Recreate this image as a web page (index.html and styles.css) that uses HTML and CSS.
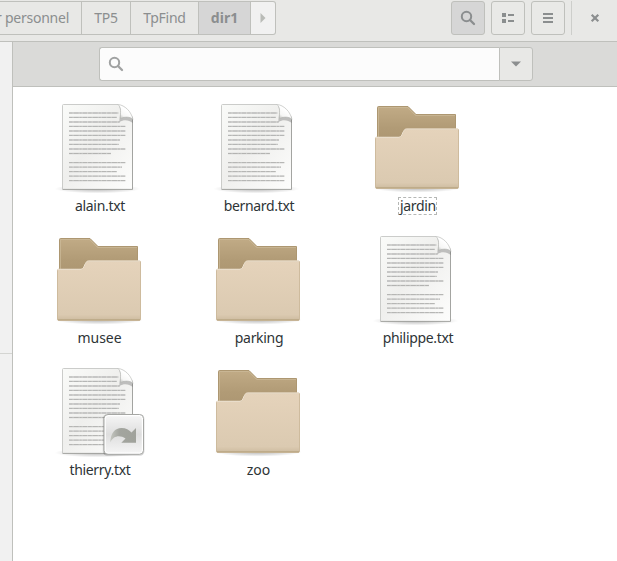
FILE: index.html
```
<!DOCTYPE html>
<html lang="fr">
<head>
<meta charset="utf-8">
<title>dir1</title>
<link rel="stylesheet" href="styles.css">
</head>
<body>
<svg class="defs" width="0" height="0" aria-hidden="true">
  <defs>
    <linearGradient id="paper" x1="0" y1="0" x2="1" y2="1"><stop offset="0" stop-color="#fafbf9"/><stop offset=".45" stop-color="#efefed"/><stop offset="1" stop-color="#fdfdfc"/></linearGradient>
    <linearGradient id="curl" x1=".1" y1="1" x2=".8" y2="0"><stop offset="0" stop-color="#b0b1ae"/><stop offset=".3" stop-color="#f6f6f5"/><stop offset=".65" stop-color="#ffffff"/><stop offset="1" stop-color="#dcdcda"/></linearGradient>
    <linearGradient id="back" x1="0" y1="0" x2="0" y2="1"><stop offset="0" stop-color="#c1ab86"/><stop offset=".4" stop-color="#b19b76"/><stop offset="1" stop-color="#a58f6c"/></linearGradient>
    <linearGradient id="front" x1="0" y1="0" x2="0" y2="1"><stop offset="0" stop-color="#e5d3bb"/><stop offset=".9" stop-color="#dbcab1"/><stop offset="1" stop-color="#cdbb9f"/></linearGradient>
    <linearGradient id="emblem" x1="0" y1="0" x2="0" y2="1"><stop offset="0" stop-color="#f4f4f4"/><stop offset=".5" stop-color="#dedede"/><stop offset="1" stop-color="#f4f4f4"/></linearGradient>
    <linearGradient id="arrow" x1="0" y1="0" x2="1" y2="0"><stop offset="0" stop-color="#c4c6c0"/><stop offset=".35" stop-color="#a3a59f"/><stop offset="1" stop-color="#a0a29b"/></linearGradient>
    <radialGradient id="shade"><stop offset="0" stop-color="#000" stop-opacity=".28"/><stop offset=".6" stop-color="#000" stop-opacity=".12"/><stop offset="1" stop-color="#000" stop-opacity="0"/></radialGradient>
    <symbol id="doc" viewBox="0 0 96 96">
      <ellipse cx="46.500" cy="88.800" rx="43" ry="4.600" fill="url(#shade)"/>
      <path d="M12.500 4.500H67.500L81.500 18.500V89.500H11.500V5.500Q11.500 4.500 12.500 4.500Z" fill="url(#paper)"/>
      <path d="M81.500 18.500V89.400H11.500" fill="none" stroke="#8d8e8a" stroke-width=".8"/>
      <path d="M11.500 89V5.500Q11.500 4.500 12.500 4.500H67" fill="none" stroke="#c5c6c4" stroke-width=".9"/>
      <path d="M18 13H67.300M18 17.400H65.700M18 22H68.700M18 26.400H74.300M18 31H74.300M18 35.400H74.300M18 40H69M18 44.400H67.700M18 49H74.300M18 53.500H60M18 62.600H74.300M18 67.100H71M18 71.600H65.700M18 76.100H74.300M18 80.600H74.300" stroke="#cfd0ce" stroke-width="1.300"/>
      <path d="M18 13H67.300M18 17.400H65.700M18 22H68.700M18 26.400H74.300M18 31H74.300M18 35.400H74.300M18 40H69M18 44.400H67.700M18 49H74.300M18 53.500H60M18 62.600H74.300M18 67.100H71M18 71.600H65.700M18 76.100H74.300M18 80.600H74.300" stroke="#9fa09d" stroke-width=".6" stroke-dasharray="3.600 .9 5.200 .8 2.200 .9 4.500 1"/>
      <path d="M68 6C71 12 68 16 68.500 22C73 19 78 20 82 23V17Z" fill="#777" opacity=".42"/>
      <path d="M67 4.500C71 8 69 13 69.500 18.500C74 16.500 79 16.500 82 19.500C80.500 12 74 5 67 4.500Z" fill="url(#curl)" stroke="#b4b5b2" stroke-width=".6"/>
    </symbol>
    <symbol id="folder" viewBox="0 0 96 96">
      <ellipse cx="48" cy="88" rx="44" ry="4.600" fill="url(#shade)"/>
      <path d="M9.500 6.500H39L47 14.500H86.500V60H8.500V7.500Q8.500 6.500 9.500 6.500Z" fill="url(#back)" stroke="#ad9771"/>
      <path d="M9.500 60V7.500H38.600L46.600 15.500H86" fill="none" stroke="#cdbb9b" stroke-width=".7"/>
      <path d="M7.500 37.300H30C34 37 33.500 29 37.500 29H88.500Q89.500 29 89.500 30V87Q89.500 88.500 88 88.500H8Q6.500 88.500 6.500 87V38.300Q6.500 37.300 7.500 37.300Z" fill="url(#front)" stroke="#c9b696" stroke-width=".9"/>
      <path d="M7 38V37.300H30C34 37 33.500 29 37.500 29H89" fill="none" stroke="#f0e6d7"/>
      <path d="M7 87.800H89" stroke="#b9a682" stroke-width="1.100"/>
    </symbol>
    <symbol id="link" viewBox="0 0 96 96">
      <rect x="51.800" y="50.200" width="41.600" height="41.600" rx="4.500" fill="#000" opacity=".16"/>
      <rect x="53" y="50.500" width="39.500" height="39.800" rx="4" fill="#fff" stroke="#a6a7a4"/>
      <rect x="54.800" y="52.300" width="36" height="36.200" rx="2.500" fill="url(#emblem)"/>
      <path d="M59.300 78.500C59.500 69 64 64 70.500 64C75 64 78 66 80.500 68.500L85 64V78.800H70.300L74.500 74.500C69 70.500 62 71.500 59.300 78.500Z" fill="url(#arrow)"/>
    </symbol>
    <symbol id="lens" viewBox="0 0 16 16"><circle cx="6.500" cy="6.500" r="4.700" fill="none" stroke="currentColor" stroke-width="2"/><path d="M10 10L14 14" stroke="currentColor" stroke-width="2.300" stroke-linecap="round"/></symbol>
  </defs>
</svg>
<div class="window">
  <header class="toolbar">
    <nav class="path">
      <span class="crumb home">r personnel</span><span class="crumb tp">TP5</span><span class="crumb find">TpFind</span><span class="crumb current">dir1</span><span class="crumb next"><svg width="6" height="12" viewBox="0 0 6 12"><path d="M.5 1L5.500 6L.5 11Z" fill="#b9bbb7"/></svg></span>
    </nav>
    <div class="actions">
      <button class="tool active" aria-label="Rechercher"><svg width="16" height="16"><use href="#lens"/></svg></button>
      <button class="tool" aria-label="Liste"><svg width="16" height="16"><path d="M2 3H6V7H2ZM2 9H6V13H2ZM8 4H14V6H8ZM8 10H14V12H8Z" fill="currentColor"/></svg></button>
      <button class="tool" aria-label="Menu"><svg width="16" height="16"><path d="M3 3H13V5H3ZM3 7H13V9H3ZM3 11H13V13H3Z" fill="currentColor"/></svg></button>
      <span class="divider"></span>
      <svg class="close" width="16" height="16"><path d="M4.700 4.700L11.300 11.300M11.300 4.700L4.700 11.300" stroke="currentColor" stroke-width="2.200"/></svg>
    </div>
  </header>
  <div class="body">
    <aside class="sidebar"><div class="places"></div></aside>
    <main class="content">
      <div class="searchbar">
        <div class="entry"><svg width="16" height="16"><use href="#lens"/></svg></div>
        <div class="dropdown"><svg width="10" height="6" viewBox="0 0 10 6"><path d="M0 .5H10L5 5.500Z" fill="#8b8e8f"/></svg></div>
      </div>
      <section class="files">
        <div class="file"><svg class="icon"><use href="#doc"/></svg><span class="name">alain.txt</span></div>
        <div class="file"><svg class="icon"><use href="#doc"/></svg><span class="name">bernard.txt</span></div>
        <div class="file"><svg class="icon"><use href="#folder"/></svg><span class="name focused">jardin</span></div>
        <div class="file"><svg class="icon"><use href="#folder"/></svg><span class="name wide">musee</span></div>
        <div class="file"><svg class="icon"><use href="#folder"/></svg><span class="name">parking</span></div>
        <div class="file"><svg class="icon"><use href="#doc"/></svg><span class="name">philippe.txt</span></div>
        <div class="file"><svg class="icon"><use href="#doc"/><use href="#link"/></svg><span class="name">thierry.txt</span></div>
        <div class="file"><svg class="icon"><use href="#folder"/></svg><span class="name wide">zoo</span></div>
      </section>
    </main>
  </div>
</div>
</body>
</html>
```
FILE: styles.css
```
* { box-sizing: border-box; }
body { margin: 0; font: 14px/20px "Noto Sans", "Open Sans", sans-serif; color: #2e3436; background: #fff; }
svg { display: block; flex: none; }
.defs { position: absolute; }
.window { width: 617px; height: 561px; display: flex; flex-direction: column; overflow: hidden; }
.toolbar { height: 42px; flex: none; display: flex; justify-content: space-between; padding-top: 1px; background: #e8e8e6; border-bottom: 1px solid #bfc0bc; }
.path { display: flex; height: 34px; color: #8b8e8f; letter-spacing: -.25px; }
.crumb { display: flex; align-items: center; justify-content: center; border: 1px solid #bfc0bc; border-left: 0; white-space: nowrap; }
.home { width: 82px; justify-content: flex-end; padding-right: 12px; }
.tp { width: 49px; }
.find { width: 68px; }
.current { width: 52px; background: #d6d6d6; font-weight: 700; letter-spacing: 0; }
.next { width: 25px; background: #f1f1f1; border-radius: 0 3px 3px 0; }
.actions { display: flex; gap: 6px; height: 34px; }
.tool { width: 34px; height: 34px; padding: 0; display: flex; align-items: center; justify-content: center; color: #8b8e8f; background: #e9e9e7; border: 1px solid #bfc0bc; border-radius: 3px; }
.active { background: #d6d6d6; }
.divider { width: 1px; height: 34px; background: #cdcecb; }
.close { margin: 9px 14px 0 9px; color: #8b8e8f; }
.body { flex: 1; display: flex; }
.sidebar { width: 13px; background: #f1f1f1; border-right: 1px solid #bfc0bc; }
.places { height: 312px; border-bottom: 1px solid #d4d5d2; }
.content { flex: 1; }
.searchbar { height: 45px; display: flex; padding: 5px 84px 0 86px; background: #dadad8; border-bottom: 1px solid #bfc0bc; }
.entry { flex: 1; height: 34px; display: flex; align-items: center; padding-left: 8px; color: #a0a2a2; background: #fcfcfc; border: 1px solid #bfc0bc; border-right: 0; border-radius: 3px 0 0 3px; }
.dropdown { width: 34px; height: 34px; display: flex; align-items: center; justify-content: center; background: #e8e8e6; border: 1px solid #bfc0bc; border-radius: 0 3px 3px 0; }
.files { display: grid; grid-template-columns: repeat(3, 159px); grid-auto-rows: 132px; padding: 13px 0 0 7px; }
.file { display: flex; flex-direction: column; align-items: center; }
.icon { width: 96px; height: 96px; margin-right: 1px; }
.name { height: 18px; margin-top: 1px; line-height: 18px; padding-left: 1px; letter-spacing: -.32px; }
.wide { padding: 0; letter-spacing: -.05px; }
.focused { border: 1px dashed #b5b7b5; line-height: 16px; }
```
